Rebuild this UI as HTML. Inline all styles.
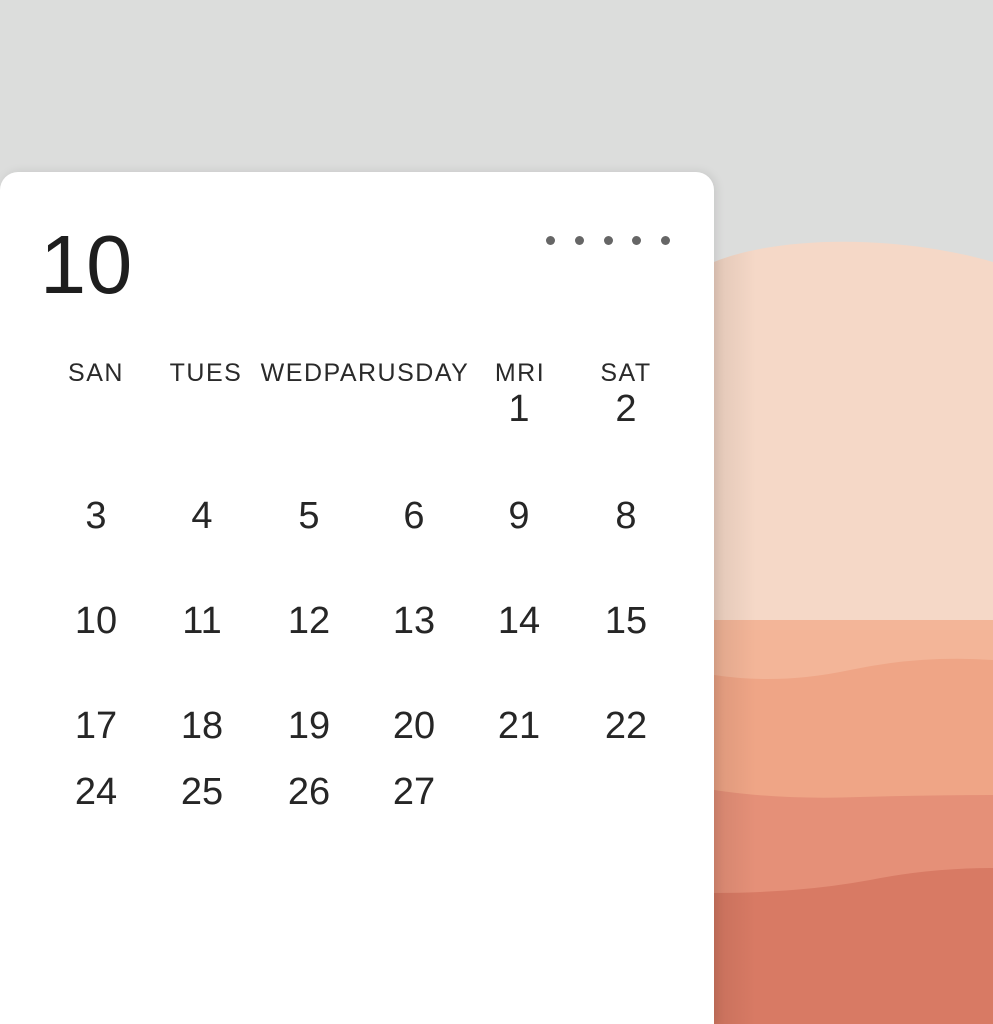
<!DOCTYPE html>
<html><head><meta charset="utf-8"><style>
html,body{margin:0;padding:0}
body{width:993px;height:1024px;overflow:hidden;background:#dcdddc;position:relative;font-family:"Liberation Sans",sans-serif;}
svg.bg{position:absolute;left:0;top:0}
.card{position:absolute;left:0;top:172px;width:714px;height:852px;background:#fff;border-radius:18px 18px 0 0;box-shadow:2px 0 10px rgba(0,0,0,0.10)}
.t{position:absolute;color:#262626;white-space:nowrap;line-height:1}
.n{font-size:38px;transform:translateX(-50%);}
.d{font-size:25px;letter-spacing:1.5px;transform:translateX(-50%);color:#2a2a2a}
.dot{position:absolute;width:9px;height:9px;border-radius:50%;background:#666;top:236px}
</style></head><body>
<svg class="bg" width="993" height="1024">
<defs><linearGradient id="sh" x1="0" x2="1"><stop offset="0" stop-color="#000" stop-opacity="0.08"/><stop offset="0.15" stop-color="#000" stop-opacity="0"/></linearGradient>
<clipPath id="c"><path d="M714 262 C780 235 900 235 993 262 L993 1024 L714 1024 Z"/></clipPath></defs>
<g clip-path="url(#c)">
<rect x="714" y="230" width="279" height="400" fill="#f5d8c7"/>
<rect x="714" y="620" width="279" height="60" fill="#f3b598"/>
<path d="M714 675 Q780 685 850 670 Q920 655 993 660 L993 800 L714 800 Z" fill="#efa586"/>
<path d="M714 790 Q780 800 860 797 Q930 795 993 795 L993 895 L714 895 Z" fill="#e59078"/>
<path d="M714 893 Q800 893 870 880 Q930 868 993 868 L993 1024 L714 1024 Z" fill="#d87a64"/>
<rect x="714" y="230" width="279" height="794" fill="url(#sh)"/>
</g>
</svg>
<div class="card"></div>
<div class="t" style="left:40px;top:223px;font-size:83px;color:#1e1e1e">10</div>
<div class="dot" style="left:546px"></div><div class="dot" style="left:575px"></div><div class="dot" style="left:604px"></div><div class="dot" style="left:632px"></div><div class="dot" style="left:661px"></div>
<div class="t d" style="left:96px;top:361px">SAN</div>
<div class="t d" style="left:206px;top:361px">TUES</div>
<div class="t d" style="left:365px;top:361px">WEDPARUSDAY</div>
<div class="t d" style="left:520px;top:361px">MRI</div>
<div class="t d" style="left:626px;top:361px">SAT</div>
<div class="t n" style="left:519px;top:390px">1</div>
<div class="t n" style="left:626px;top:390px">2</div>
<div class="t n" style="left:96px;top:497px">3</div><div class="t n" style="left:202px;top:497px">4</div><div class="t n" style="left:309px;top:497px">5</div><div class="t n" style="left:414px;top:497px">6</div><div class="t n" style="left:519px;top:497px">9</div><div class="t n" style="left:626px;top:497px">8</div>
<div class="t n" style="left:96px;top:602px">10</div><div class="t n" style="left:202px;top:602px">11</div><div class="t n" style="left:309px;top:602px">12</div><div class="t n" style="left:414px;top:602px">13</div><div class="t n" style="left:519px;top:602px">14</div><div class="t n" style="left:626px;top:602px">15</div>
<div class="t n" style="left:96px;top:707px">17</div><div class="t n" style="left:202px;top:707px">18</div><div class="t n" style="left:309px;top:707px">19</div><div class="t n" style="left:414px;top:707px">20</div><div class="t n" style="left:519px;top:707px">21</div><div class="t n" style="left:626px;top:707px">22</div>
<div class="t n" style="left:96px;top:773px">24</div><div class="t n" style="left:202px;top:773px">25</div><div class="t n" style="left:309px;top:773px">26</div><div class="t n" style="left:414px;top:773px">27</div>
</body></html>
